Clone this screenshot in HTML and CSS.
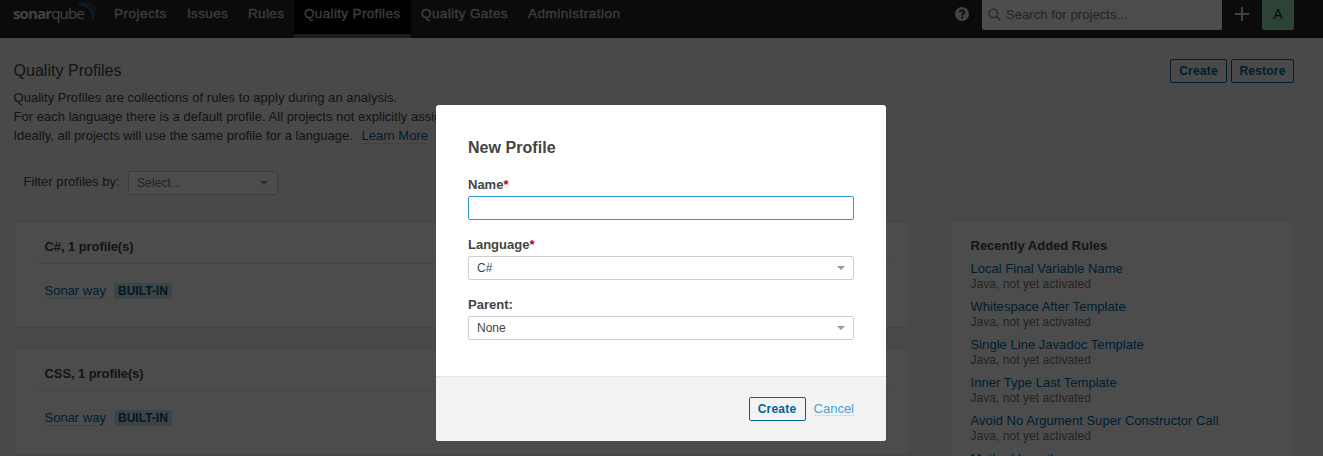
FILE: index.html
```html
<!DOCTYPE html>
<html lang="en">
<head>
<meta charset="utf-8">
<title>Quality Profiles</title>
<link rel="stylesheet" href="styles.css">
</head>
<body>
<div class="page">
  <header class="navbar">
    <a class="logo"><b>sonar</b><span>qube</span>
      <svg class="waves" viewBox="0 0 20 19" width="20" height="19" fill="none" stroke="#3d86b5"><path d="M.5 3.500C9 3 14.800 9 15 18" stroke-width="1.200"/><path d="M4 1.800C11 2.300 15.800 7 16.700 13.500" stroke-width=".9"/><path d="M10.500 1.300C14.500 3 17 6 18.200 10" stroke-width=".8"/></svg>
    </a>
    <nav class="menu">
      <a class="m1">Projects</a><a class="m2">Issues</a><a class="m3">Rules</a><a class="m4 active">Quality Profiles</a><a class="m5">Quality Gates</a><a class="m6">Administration</a>
    </nav>
    <div class="tools">
      <svg class="help" viewBox="0 0 14 14" width="14" height="14"><circle cx="7" cy="7" r="7" fill="#ddd"/><path d="M4.800 5.200C4.900 2.800 9.300 2.700 9.300 5.200C9.300 6.700 7.100 6.800 7.100 8.500" fill="none" stroke="#262626" stroke-width="1.900"/><path d="M6.100 9.700h2v1.800h-2z" fill="#262626"/></svg>
      <div class="search"><svg viewBox="0 0 13 13" width="13" height="13" fill="none" stroke="#999" stroke-width="1.800"><circle cx="5.400" cy="5.400" r="4.300"/><path d="M8.600 8.600l3.600 3.600"/></svg><span>Search for projects...</span></div>
      <svg class="plus" viewBox="0 0 14 14" width="14" height="14" stroke="#ddd" stroke-width="2"><path d="M7 0v14M0 7h14"/></svg>
      <div class="avatar">A</div>
    </div>
  </header>
  <main class="content">
    <div class="head">
      <div class="intro">
        <h1>Quality Profiles</h1>
        <p>Quality Profiles are collections of rules to apply during an analysis.</p>
        <p>For each language there is a default profile. All projects not explicitly assigned</p>
        <p class="ideal">Ideally, all projects will use the same profile for a language. <a class="link">Learn More</a></p>
      </div>
      <div class="actions"><button>Create</button><button class="restore">Restore</button></div>
    </div>
    <div class="columns">
      <div class="left">
        <div class="filter"><label>Filter profiles by:</label><div class="select small"><span>Select...</span><i class="caret"></i></div></div>
        <section class="card"><h2>C#, 1 profile(s)</h2><div class="row"><a class="link">Sonar way</a><span class="badge">BUILT-IN</span></div></section>
        <section class="card"><h2>CSS, 1 profile(s)</h2><div class="row"><a class="link">Sonar way</a><span class="badge">BUILT-IN</span></div></section>
      </div>
      <aside class="rules">
        <h2>Recently Added Rules</h2>
        <div class="rule"><a>Local Final Variable Name</a><small>Java, not yet activated</small></div>
        <div class="rule"><a>Whitespace After Template</a><small>Java, not yet activated</small></div>
        <div class="rule"><a>Single Line Javadoc Template</a><small>Java, not yet activated</small></div>
        <div class="rule"><a>Inner Type Last Template</a><small>Java, not yet activated</small></div>
        <div class="rule"><a>Avoid No Argument Super Constructor Call</a><small>Java, not yet activated</small></div>
        <div class="rule"><a>Method Length</a></div>
      </aside>
    </div>
  </main>
</div>
<div class="overlay">
  <form class="modal">
    <div class="body">
      <h2>New Profile</h2>
      <div class="field"><label>Name<em>*</em></label><div class="select focus"></div></div>
      <div class="field"><label>Language<em>*</em></label><div class="select"><span>C#</span><i class="caret"></i></div></div>
      <div class="field"><label>Parent:</label><div class="select"><span>None</span><i class="caret"></i></div></div>
    </div>
    <footer><button type="button">Create</button><a class="link">Cancel</a></footer>
  </form>
</div>
</body>
</html>
```
FILE: styles.css
```css
* { box-sizing: border-box; }
html, body { margin: 0; height: 456px; overflow: hidden; }
body { font: 13px/19px "Liberation Sans", Arial, sans-serif; color: #444; white-space: nowrap; }
h1, h2, p { margin: 0; font-size: 13px; }
button { height: 24px; width: 57px; padding: 0; border: 1px solid #00659b; border-radius: 2px; background: transparent; color: #00659b; font: bold 12px/22px "Liberation Sans", Arial, sans-serif; letter-spacing: .2px; }
.link { color: #00659b; border-bottom: 1px solid #cae3f2; line-height: 15px; display: inline-block; }
.page { height: 456px; overflow: hidden; background: #f3f3f3; }
.navbar { display: flex; height: 38px; background: #262626; padding: 0 29px 0 13px; }
.logo { display: flex; width: 91px; font: 15px/27px "Open Sans", "Noto Sans", sans-serif; color: #ddd; letter-spacing: -.85px; }
.waves { margin: 1px 0 0 -6px; }
.menu { display: flex; height: 38px; }
.menu a { padding: 0 10px; line-height: 28px; font-size: 13.5px; letter-spacing: .35px; color: #ccc; -webkit-text-stroke: .3px #ccc; }
.menu .m1 { width: 73px; letter-spacing: .5px; }
.menu .m2 { width: 61px; }
.menu .m3 { width: 56px; }
.menu .m4 { width: 117px; }
.menu .m5 { width: 107px; letter-spacing: .4px; }
.menu .m6 { letter-spacing: .5px; }
.menu .active { background: #000; border-bottom: 4px solid #5a5a5a; }
.tools { display: flex; margin-left: auto; height: 30px; }
.help { margin: 7px 13px 0 0; }
.search { display: flex; width: 240px; padding: 8px 6px 0; gap: 5px; background: #fff; border-radius: 0 0 2px 2px; color: #777; line-height: 14px; letter-spacing: .08px; }
.plus { margin: 7px 13px 0; }
.avatar { width: 32px; background: #93e2b2; line-height: 28px; text-align: center; color: #222; font-size: 14px; border-radius: 0 0 2px 2px; }
.content { padding: 21px 29px 0 13px; }
.head { display: flex; justify-content: space-between; height: 110px; }
h1 { font-size: 16px; font-weight: normal; line-height: 21px; margin-bottom: 7px; }
.intro { width: 440px; padding: 1px 0 0 .5px; letter-spacing: .03px; }
.intro .ideal { letter-spacing: .01px; }
.intro .link { margin-left: 5px; }
.actions { display: flex; gap: 4px; }
.restore { width: 63px; }
.columns { display: flex; gap: 40px; }
.left { width: 897px; }
.filter { display: flex; height: 32px; border-bottom: 1px solid #e6e6e6; padding: 2px 0 0 10px; margin-bottom: 20px; }
.filter label { width: 105px; padding-left: .5px; line-height: 22px; letter-spacing: .05px; }
.select { display: flex; height: 24px; align-items: center; justify-content: space-between; padding: 0 8px; border: 1px solid #cdcdcd; border-radius: 2px; background: #fff; font-size: 12px; }
.small { width: 150px; color: #777; padding-right: 9px; }
.small span { letter-spacing: .1px; }
.caret { border: 4px solid transparent; border-top-color: #999; border-bottom: 0; }
.card { height: 107px; margin: 0 0 20px 1px; padding: 15px 20px 0; background: #fff; border: 1px solid #e6e6e6; }
.card h2 { height: 27px; padding-left: 9.5px; letter-spacing: -.08px; border-bottom: 1px solid #e6e6e6; }
.row { display: flex; padding: 19px 9.5px; align-items: flex-start; }
.badge { margin-left: 8px; width: 58px; height: 16px; border-radius: 2px; background: #cae3f2; color: #0e516f; font: bold 12px/16px "Liberation Sans", Arial, sans-serif; text-align: center; }
.rules { width: 344px; height: 300px; margin-top: 51px; padding: 15px 19.5px; border: 1px solid #e6e6e6; background: #fff; }
.rules h2 { height: 23px; }
.rule { height: 38px; line-height: 16px; padding-top: 2px; }
.rule a, .rule small { display: block; }
.rule a { color: #00659b; letter-spacing: .03px; }
.rule small { font-size: 12px; line-height: 14px; color: #777; letter-spacing: .05px; }
.overlay { position: absolute; inset: 0; background: rgba(0, 0, 0, .7); padding: 105px 437px 0 436px; }
.modal { height: 336px; background: #fff; border-radius: 3px; overflow: hidden; }
.body { height: 271px; padding: 32px 32px 0; }
.modal h2 { font-size: 16px; line-height: 21px; height: 38px; letter-spacing: .05px; }
.field { height: 60px; }
.field label { display: block; height: 21px; line-height: 20px; font-weight: bold; }
.field em { color: #b00; font-style: normal; }
.focus { border-color: #2d9bd8; }
footer { display: flex; height: 65px; padding: 20px 32px; justify-content: flex-end; gap: 8px; background: #f3f3f3; border-top: 1px solid #e6e6e6; }
footer .link { height: 19px; line-height: 24px; color: #4b9fd5; }
```
